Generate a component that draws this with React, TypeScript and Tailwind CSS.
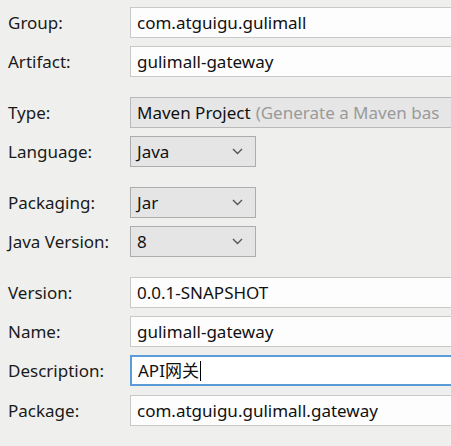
import React from "react";

const font = { fontFamily: '"Noto Sans", "Noto Sans CJK SC", sans-serif' };

function Label({ children }: { children: React.ReactNode }) {
  return <div className="w-[122px] shrink-0 text-[17px] text-[#1a1a1a] leading-none">{children}</div>;
}

function TextField({ value, gray, focused }: { value: React.ReactNode; gray?: boolean; focused?: boolean }) {
  return (
    <div
      className={
        "h-full w-[340px] shrink-0 flex items-center pl-[6px] text-[17px] text-[#111] whitespace-nowrap overflow-hidden " +
        (focused
          ? "border-2 border-[#5a9bd8] bg-white"
          : gray
          ? "border border-[#b9b9b9] bg-[#e6e6e6]"
          : "border border-[#c9c9c9] bg-[#fdfdfd]")
      }
    >
      {value}
    </div>
  );
}

function Combo({ value }: { value: string }) {
  return (
    <div className="h-full w-[126px] shrink-0 flex items-center justify-between pl-[6px] pr-[12px] border border-[#adadad] bg-[#e5e5e5] text-[17px] text-[#111]">
      <span>{value}</span>
      <svg width="11" height="7" viewBox="0 0 11 7" fill="none">
        <path d="M1 1 L5.5 5.5 L10 1" stroke="#555" strokeWidth="1.4" />
      </svg>
    </div>
  );
}

function Row({ label, children, className = "" }: { label: string; children: React.ReactNode; className?: string }) {
  return (
    <div className={"flex items-center h-[31px] " + className}>
      <Label>{label}</Label>
      {children}
    </div>
  );
}

export default function App() {
  return (
    <div className="w-[451px] h-[446px] overflow-hidden bg-[#eff0ee] pl-[8px] pt-[7px]" style={font}>
      <div className="flex flex-col gap-[20px]">
        <div className="flex flex-col gap-[8px]">
          <Row label="Group:"><TextField value="com.atguigu.gulimall" /></Row>
          <Row label="Artifact:"><TextField value="gulimall-gateway" /></Row>
        </div>
        <div className="flex flex-col gap-[8px]">
          <Row label="Type:">
            <TextField
              gray
              value={
                <>
                  <span>Maven Project</span>
                  <span className="text-[#9a9a9a] ml-[5px]">(Generate a Maven bas</span>
                </>
              }
            />
          </Row>
          <Row label="Language:"><Combo value="Java" /></Row>
        </div>
        <div className="flex flex-col gap-[8px]">
          <Row label="Packaging:"><Combo value="Jar" /></Row>
          <Row label="Java Version:"><Combo value="8" /></Row>
        </div>
        <div className="flex flex-col gap-[8px]">
          <Row label="Version:"><TextField value="0.0.1-SNAPSHOT" /></Row>
          <Row label="Name:"><TextField value="gulimall-gateway" /></Row>
          <Row label="Description:">
            <TextField
              focused
              value={
                <>
                  <span>API网关</span>
                  <span className="inline-block w-[1px] h-[20px] bg-black ml-[1px]" />
                </>
              }
            />
          </Row>
          <Row label="Package:" className="mt-[1px]"><TextField value="com.atguigu.gulimall.gateway" /></Row>
        </div>
      </div>
    </div>
  );
}
